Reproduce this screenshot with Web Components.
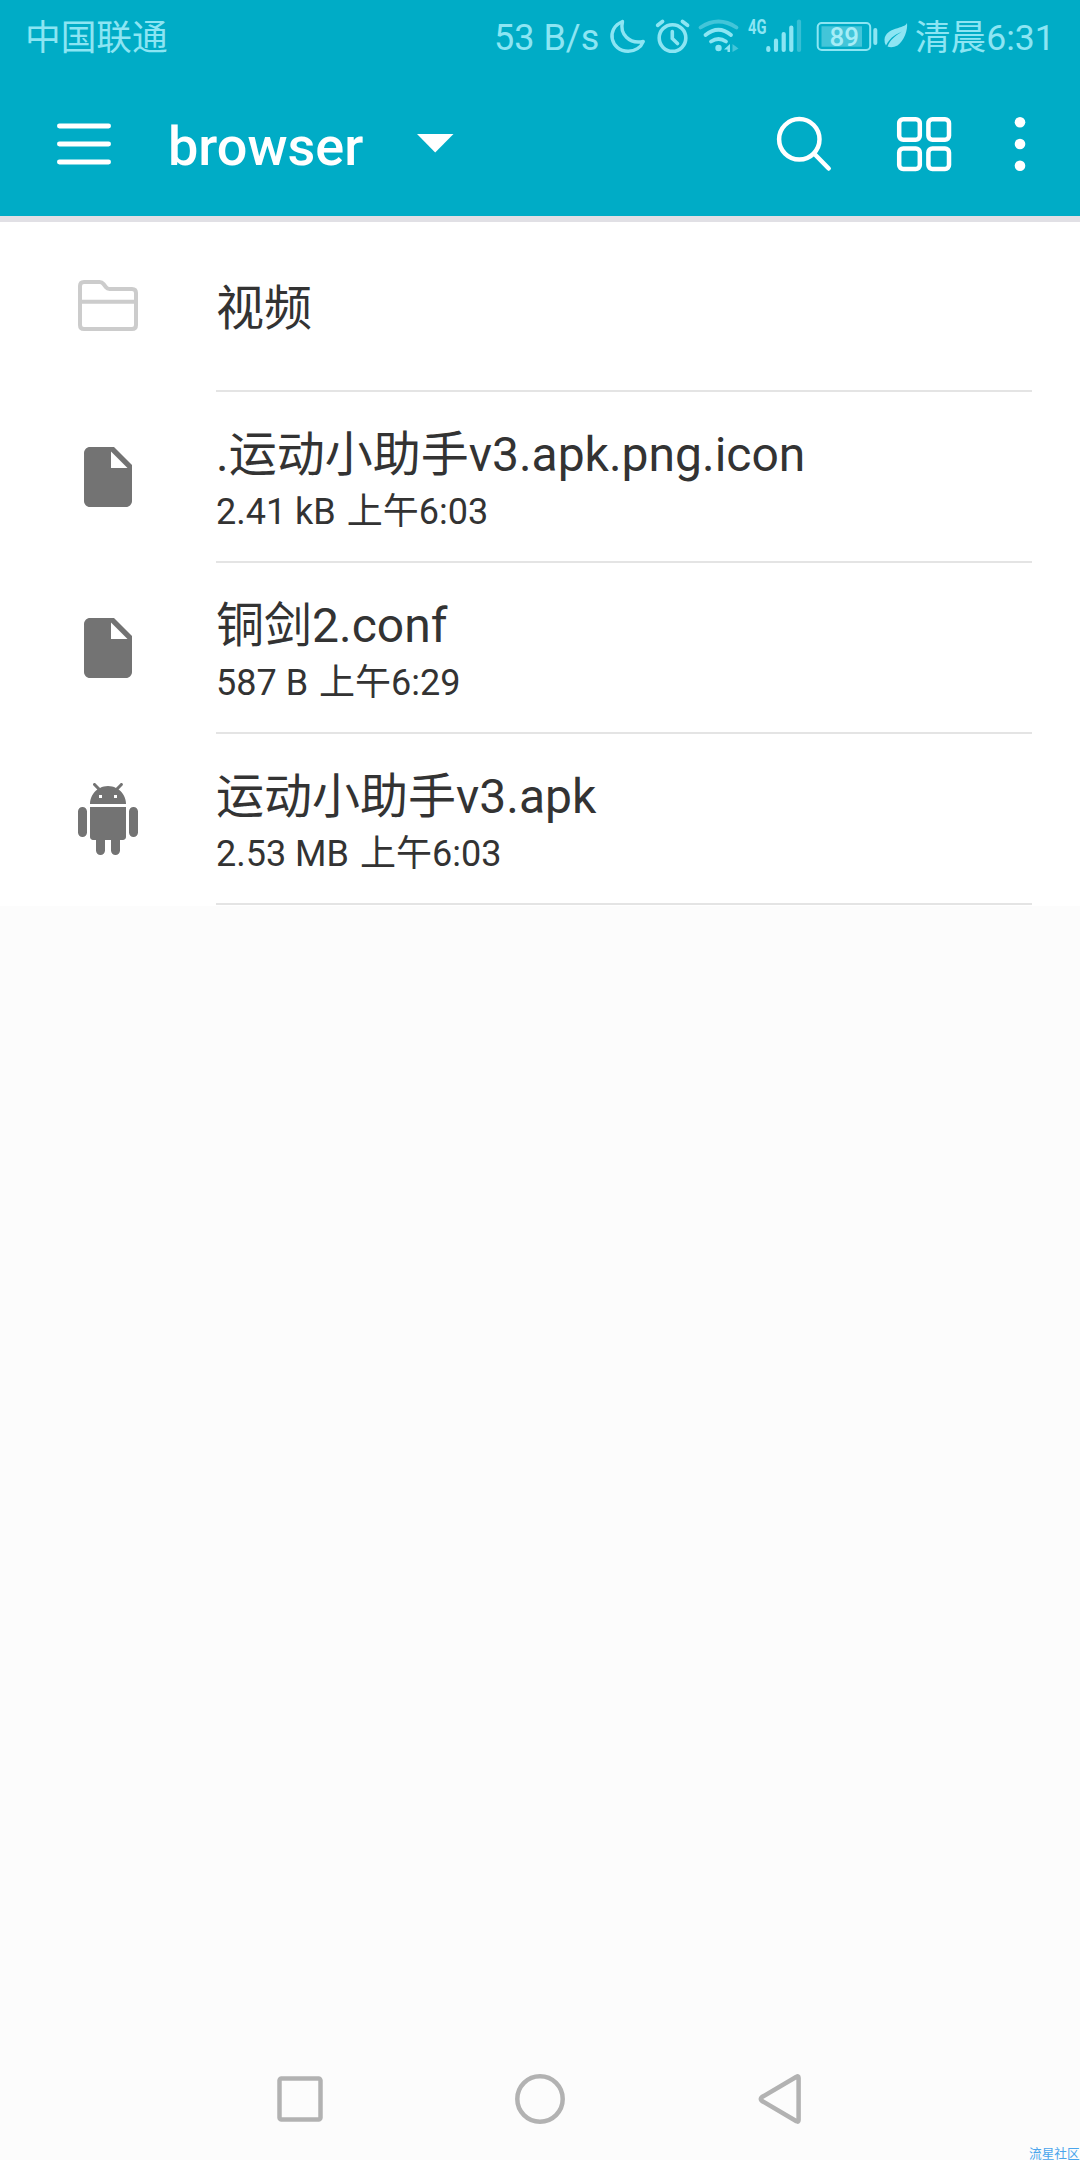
<!DOCTYPE html>
<html lang="zh-CN">
<head>
<meta charset="utf-8">
<title>browser</title>
<style>
html,body{margin:0;padding:0;height:2160px;overflow:hidden}
body{font-family:Roboto,"Noto Sans CJK SC",sans-serif;background:#fcfcfc}
</style>
</head>
<body>
<file-screen>
  <status-bar slot="top" carrier="中国联通" speed="53 B/s" battery="89" time="清晨6:31"></status-bar>
  <tool-bar slot="top">browser</tool-bar>
  <file-row icon="folder">视频</file-row>
  <file-row icon="file" size="2.41 kB" time="上午6:03">.运动小助手v3.apk.png.icon</file-row>
  <file-row icon="file" size="587 B" time="上午6:29">铜剑2.conf</file-row>
  <file-row icon="apk" size="2.53 MB" time="上午6:03">运动小助手v3.apk</file-row>
  <nav-bar slot="bottom">流星社区</nav-bar>
</file-screen>
<script>
class FileScreen extends HTMLElement{
  constructor(){super();this.attachShadow({mode:'open'}).innerHTML=`
  <style>
  :host{display:flex;flex-direction:column;width:1080px;height:2160px;background:#fcfcfc;overflow:hidden}
  header{background:#00acc6;border-bottom:6px solid #e1e0e5}
  main{background:#fff}
  footer{margin-top:auto}
  </style>
  <header><slot name="top"></slot></header><main><slot></slot></main><footer><slot name="bottom"></slot></footer>`}
}
customElements.define('file-screen',FileScreen);

class StatusBar extends HTMLElement{
  connectedCallback(){const a=n=>this.getAttribute(n);this.attachShadow({mode:'open'}).innerHTML=`
  <style>
  :host{display:flex;height:72px;color:#8ce5f3;font-size:36px;line-height:76px;white-space:nowrap}
  svg{display:block;flex:none}
  .carrier{box-sizing:border-box;width:494px;padding-left:25px;font-size:35.7px}
  .speed{width:112px}
  .time{padding-left:1px;font-size:35.6px}
  text{font-family:Roboto,sans-serif;fill:#8ce5f3}
  </style>
  <span class="carrier">${a('carrier')}</span><span class="speed">${a('speed')}</span>
  <svg width="44" height="72" viewBox="605 0 44 72"><path d="M621.500 21.500C604 29 610 51 627 51.300C634 51.400 640 47.500 642.300 41.500C628 44.500 618.500 34 621.500 21.500Z" fill="none" stroke="#8ce5f3" stroke-width="3.400" stroke-linejoin="round"/></svg>
  <svg width="46" height="72" viewBox="650 0 46 72" fill="none" stroke="#8ce5f3" stroke-width="3.600" stroke-linecap="round"><circle cx="672.500" cy="38" r="13.300"/><path d="M672.300 31.500V38.500L677.500 43.500"/><path d="M657.700 25.300L662.500 21.500M682.500 21.500L687.500 25.300" stroke-width="3.800"/></svg>
  <svg width="48" height="72" viewBox="696 0 48 72" fill="none" stroke="#8ce5f3" stroke-width="3.800" stroke-linecap="round"><path d="M700.500 27.500Q718.500 15.500 736.500 27.500" stroke="#43c5d9"/><path d="M705.500 35Q718.500 24.500 731 35"/><path d="M711 41.500Q718.500 36.500 726 41.500"/><circle cx="718.500" cy="48" r="3.200" fill="#8ce5f3" stroke="none"/><path d="M730 44V52H727.500V49.500H724Z" fill="#8ce5f3" stroke="none"/><path d="M732.500 44L738.500 48.500L732.500 52Z" fill="#43c5d9" stroke="none"/></svg>
  <svg width="64" height="72" viewBox="744 0 64 72"><text x="748" y="33.800" font-size="20" font-weight="700" textLength="18.500" lengthAdjust="spacingAndGlyphs">4G</text><g stroke="#8ce5f3" stroke-width="4.200" stroke-linecap="round"><path d="M768.300 48.200V50M776 40.700V50M783.700 34V50M791.300 27.500V50"/><path d="M799 21.500V50" stroke="#37bfd4"/></g></svg>
  <svg width="72" height="72" viewBox="808 0 72 72"><rect x="817.700" y="23" width="52.500" height="27" rx="4" fill="none" stroke="#8ce5f3" stroke-width="2"/><rect x="821.500" y="26.300" width="40.500" height="20.400" fill="#43c5d9"/><rect x="873.300" y="28" width="4" height="17" rx="2" fill="#8ce5f3"/><text x="829.500" y="45.900" font-size="26" font-weight="500" textLength="29.500" lengthAdjust="spacingAndGlyphs" style="fill:#a6edf7">${a('battery')}</text></svg>
  <svg width="34" height="72" viewBox="880 0 34 72"><path d="M907 23C905 29 886 27 884.500 39.500Q884.300 43 886 45.500C891 36 897 34 902 31.500C895 36 890 40 887.500 46.500Q892 48.500 897.500 45.500C904 41 908 30 907 23Z" fill="#8ce5f3"/></svg>
  <span class="time">${a('time')}</span>`}
}
customElements.define('status-bar',StatusBar);

class ToolBar extends HTMLElement{
  constructor(){super();this.attachShadow({mode:'open'}).innerHTML=`
  <style>
  :host{display:flex;height:144px;color:#fff;font-size:54px;font-weight:500;line-height:150px}
  svg{display:block;flex:none;fill:none;stroke:#fff;stroke-width:4.5;stroke-linecap:round}
  span{width:238px}
  .find{margin-left:auto}
  </style>
  <svg width="168" height="144" viewBox="0 72 168 144"><path d="M59.400 126H108.600M59.400 144H108.600M59.400 162H108.600" stroke-width="4.800"/></svg>
  <span><slot></slot></span>
  <svg width="60" height="144" viewBox="406 72 60 144"><path d="M417 134H453.500L435.200 152.500Z" fill="#fff" stroke="none"/></svg>
  <svg class="find" width="104" height="144" viewBox="756 72 104 144"><circle cx="799.300" cy="139.300" r="20.200"/><path d="M814.500 154L828.700 168.500"/></svg>
  <svg width="128" height="144" viewBox="860 72 128 144"><rect x="899.200" y="119.200" width="20.600" height="20.600" rx="4"/><rect x="928.400" y="119.200" width="20.600" height="20.600" rx="4"/><rect x="899.200" y="148.400" width="20.600" height="20.600" rx="4"/><rect x="928.400" y="148.400" width="20.600" height="20.600" rx="4"/></svg>
  <svg width="92" height="144" viewBox="988 72 92 144"><g fill="#fff" stroke="none"><circle cx="1020" cy="122.300" r="5.300"/><circle cx="1020" cy="144" r="5.300"/><circle cx="1020" cy="165.700" r="5.300"/></g></svg>`}
}
customElements.define('tool-bar',ToolBar);

const ICONS={
 folder:'<svg width="60" height="52" viewBox="0 0 60 52" fill="none" stroke="#ccc" stroke-width="4" stroke-linejoin="round"><path d="M6 2H21.500Q24 2 25.500 4L28 7.300Q29.300 9 31.500 9H54Q58 9 58 13V45Q58 49 54 49H6Q2 49 2 45V6Q2 2 6 2ZM2 21.700H58"/></svg>',
 file:'<svg width="72" height="72" viewBox="0 0 24 24" fill="#737373"><path d="M6 2c-1.100 0-1.990.9-1.990 2L4 20c0 1.100.89 2 1.990 2H18c1.100 0 2-.9 2-2V8l-6-6H6zm7 7V3.500L18.500 9H13z"/></svg>',
 apk:'<svg width="72" height="72" viewBox="0 0 24 24" fill="#737373"><path d="M6 18c0 .55.45 1 1 1h1v3.500c0 .83.67 1.500 1.500 1.500s1.500-.67 1.500-1.500V19h2v3.500c0 .83.67 1.500 1.500 1.500s1.500-.67 1.500-1.500V19h1c.55 0 1-.45 1-1V8H6v10zM3.500 8C2.670 8 2 8.670 2 9.500v7c0 .83.67 1.500 1.500 1.500S5 17.330 5 16.500v-7C5 8.670 4.330 8 3.500 8zm17 0c-.83 0-1.500.67-1.500 1.500v7c0 .83.67 1.500 1.500 1.500s1.500-.67 1.500-1.500v-7c0-.83-.67-1.500-1.500-1.500zm-4.970-5.840l1.300-1.300c.2-.2.2-.51 0-.71-.2-.2-.51-.2-.71 0l-1.480 1.480C13.850 1.230 12.950 1 12 1c-.96 0-1.860.23-2.660.63L7.850.15c-.2-.2-.51-.2-.71 0-.2.2-.2.51 0 .71l1.310 1.310C6.970 3.260 6 5.010 6 7h12c0-1.990-.97-3.750-2.470-4.840zM10 5H9V4h1v1zm5 0h-1V4h1v1z"/></svg>'
};
class FileRow extends HTMLElement{
  connectedCallback(){const s=this.getAttribute('size');this.attachShadow({mode:'open'}).innerHTML=`
  <style>
  :host{display:flex;height:171px;color:#333}
  .icon{width:216px;height:168px;display:flex;align-items:center;justify-content:center}
  .icon svg{display:block}
  .body{box-sizing:border-box;width:816px;height:170px;padding-top:${s?10:6}px;border-bottom:2px solid #e4e4e4;display:flex;flex-direction:column;justify-content:center;white-space:nowrap}
  .name{font-size:48px;line-height:60px}
  .meta{font-size:36px;line-height:54px;display:flex;gap:11px}
  </style>
  <div class="icon">${ICONS[this.getAttribute('icon')]}</div>
  <div class="body"><div class="name"><slot></slot></div>${s?`<div class="meta"><span>${s}</span><span>${this.getAttribute('time')}</span></div>`:''}</div>`}
}
customElements.define('file-row',FileRow);

class NavBar extends HTMLElement{
  constructor(){super();this.attachShadow({mode:'open'}).innerHTML=`
  <style>
  :host{display:block;position:relative;height:122px;overflow:hidden}
  .keys{display:flex;justify-content:center}
  svg{display:block;fill:none;stroke:#b2b2b2;stroke-width:4.5;stroke-linejoin:round}
  .mark{position:absolute;left:1029px;top:109px;font-size:12.7px;line-height:13px;color:#4aa5ec;white-space:nowrap}
  </style>
  <div class="keys">
  <svg width="240" height="122" viewBox="180 2038 240 122"><rect x="279.500" y="2078.500" width="41" height="41" rx="2"/></svg>
  <svg width="240" height="122" viewBox="420 2038 240 122"><circle cx="540" cy="2099" r="22.700"/></svg>
  <svg width="240" height="122" viewBox="660 2038 240 122"><path d="M798.600 2078Q798.600 2075.500 796.500 2076.800L762 2097Q759.500 2099 762 2101L796.500 2121.200Q798.600 2122.500 798.600 2120Z"/></svg>
  </div>
  <span class="mark"><slot></slot></span>`}
}
customElements.define('nav-bar',NavBar);
</script>
</body>
</html>
